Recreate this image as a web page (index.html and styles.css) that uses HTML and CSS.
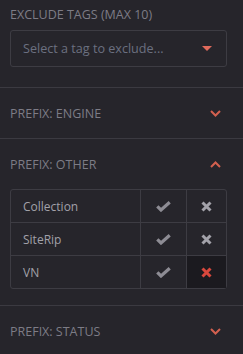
FILE: index.html
```html
<!DOCTYPE html>
<html lang="en">
<head>
  <meta charset="UTF-8" />
  <title>Filters</title>
  <meta name="viewport" content="width=device-width, initial-scale=1.0"/>
  <link rel="stylesheet" href="styles.css">
</head>
<body>

  <div class="filters">

    <!-- Exclude tags -->
    <div class="section exclude">
      <div class="exclude-label">Exclude Tags (max 10)</div>
      <div class="select">
        <span class="placeholder">Select a tag to exclude...</span>
        <svg class="caret" width="10" height="5" viewBox="0 0 10 5"><path d="M0 0H10L5 5Z" fill="#e06a5c"/></svg>
      </div>
    </div>

    <!-- Engine -->
    <div class="section">
      <div class="section-head">
        <span>Prefix: Engine</span>
        <svg class="chevron" width="11" height="7" viewBox="0 0 11 7"><path d="M1 1L5.5 5.5L10 1" fill="none" stroke="#d2604f" stroke-width="2"/></svg>
      </div>
    </div>

    <!-- Other -->
    <div class="section">
      <div class="section-head">
        <span>Prefix: Other</span>
        <svg class="chevron" width="11" height="7" viewBox="0 0 11 7"><path d="M1 6L5.5 1.5L10 6" fill="none" stroke="#d2604f" stroke-width="2"/></svg>
      </div>
      <div class="section-body">
        <table class="prefix-table">
          <colgroup>
            <col class="col-name">
            <col class="col-yes">
            <col class="col-no">
          </colgroup>
          <tr>
            <td class="name">Collection</td>
            <td class="pick"><svg width="15" height="11" viewBox="0 0 15 11"><path d="M1.3 5.3L5 9L13.7 1.3" fill="none" stroke="#8d8c94" stroke-width="3.2"/></svg></td>
            <td class="pick"><svg width="11" height="11" viewBox="0 0 11 11"><path d="M1.5 1.5L9.5 9.5M9.5 1.5L1.5 9.5" fill="none" stroke="#a3a2aa" stroke-width="3"/></svg></td>
          </tr>
          <tr>
            <td class="name">SiteRip</td>
            <td class="pick"><svg width="15" height="11" viewBox="0 0 15 11"><path d="M1.3 5.3L5 9L13.7 1.3" fill="none" stroke="#8d8c94" stroke-width="3.2"/></svg></td>
            <td class="pick"><svg width="11" height="11" viewBox="0 0 11 11"><path d="M1.5 1.5L9.5 9.5M9.5 1.5L1.5 9.5" fill="none" stroke="#a3a2aa" stroke-width="3"/></svg></td>
          </tr>
          <tr>
            <td class="name">VN</td>
            <td class="pick"><svg width="15" height="11" viewBox="0 0 15 11"><path d="M1.3 5.3L5 9L13.7 1.3" fill="none" stroke="#8d8c94" stroke-width="3.2"/></svg></td>
            <td class="pick active"><svg width="11" height="11" viewBox="0 0 11 11"><path d="M1.5 1.5L9.5 9.5M9.5 1.5L1.5 9.5" fill="none" stroke="#d9483d" stroke-width="3"/></svg></td>
          </tr>
        </table>
      </div>
    </div>

    <!-- Status -->
    <div class="section">
      <div class="section-head">
        <span>Prefix: Status</span>
        <svg class="chevron" width="11" height="7" viewBox="0 0 11 7"><path d="M1 1L5.5 5.5L10 1" fill="none" stroke="#d2604f" stroke-width="2"/></svg>
      </div>
    </div>

  </div>

</body>
</html>
```

FILE: styles.css
```css
* { box-sizing: border-box; font-family: 'Open Sans', sans-serif; }
body { margin: 0; padding: 0; background: #26252b; }

.filters { width: 243px; }

.section { border-bottom: 1px solid #3b3a41; }

/* Exclude tags */
.exclude { padding: 6px 16px 20px 10px; }
.exclude-label {
  font-size: 12.5px;
  line-height: 18px;
  margin-bottom: 6px;
  text-transform: uppercase;
  color: #7d7c86;
}
.select {
  height: 37px;
  border: 1px solid #3d3c43;
  border-radius: 3px;
  display: flex;
  align-items: center;
  justify-content: space-between;
  padding: 0 14px 0 12px;
}
.placeholder {
  font-size: 12.6px;
  color: #6b7080;
}

/* Section header */
.section-head {
  height: 50px;
  display: flex;
  align-items: center;
  justify-content: space-between;
  padding: 0 22px 0 10px;
  font-size: 12.5px;
  text-transform: uppercase;
  color: #7d7c86;
}

.section-body { padding: 0 16px 16px 10px; }

/* Prefix table */
.prefix-table {
  width: 217px;
  table-layout: fixed;
  border-collapse: separate;
  border-spacing: 0;
  border: 1px solid #3d3c43;
  border-radius: 3px;
}
.col-name { width: 129px; }
.col-yes { width: 46px; }
.col-no { width: 40px; }
.prefix-table td {
  height: 33px;
  border-top: 1px solid #3d3c43;
  border-left: 1px solid #3d3c43;
  padding: 0;
}
.prefix-table tr:first-child td { border-top: none; height: 32px; }
.prefix-table td:first-child { border-left: none; }
.prefix-table .name {
  padding-left: 12px;
  font-size: 12px;
  color: #a2a1a9;
}
.prefix-table .pick { text-align: center; }
.prefix-table .pick svg { display: block; margin: 0 auto; }
.prefix-table .pick.active { background: #1b1a1f; }
```
